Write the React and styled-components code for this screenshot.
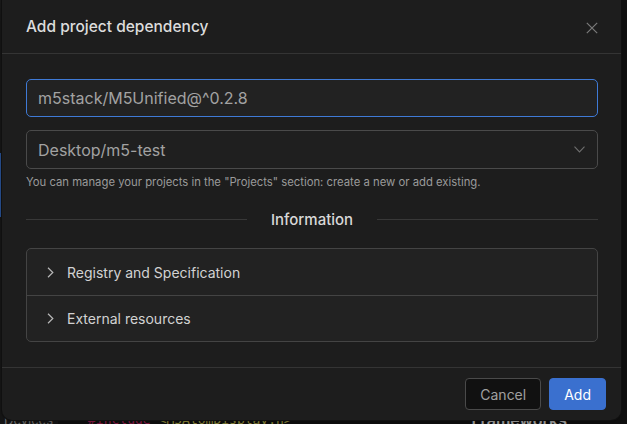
import React from 'react'
import styled, { createGlobalStyle } from 'styled-components'

const Global = createGlobalStyle`
  html, body { margin: 0; padding: 0; background: #121212; }
  body { font-family: Inter, "Noto Sans", sans-serif; }
  * { box-sizing: border-box; }
`

const Screen = styled.div`
  position: relative;
  width: 627px;
  height: 424px;
  overflow: hidden;
  display: flex;
  background: #121212;
`

const Sidebar = styled.aside`
  width: 58px;
  background: #1a1a1a;
  display: flex;
  flex-direction: column;
`

const ActiveMark = styled.div`
  width: 2px;
  height: 64px;
  margin-top: 153px;
  background: #2f5fae;
`

const Grow = styled.div`
  flex: 1;
`

const BottomLine = styled.div`
  height: 14px;
  display: flex;
  align-items: flex-start;
  padding-left: ${(p) => p.$indent || 0}px;
  font-size: 13px;
  line-height: 20px;
  color: ${(p) => p.$color || '#8a8a8a'};
  white-space: nowrap;
`

const Editor = styled.main`
  flex: 1;
  display: flex;
  flex-direction: column;
`

const EditorBottom = styled.div`
  display: flex;
  justify-content: space-between;
  padding-right: 60px;
`

const Code = styled.span`
  font-family: "DejaVu Sans Mono", monospace;
  font-size: 13px;
  color: ${(p) => p.$color};
  margin-right: ${(p) => p.$gap || 0}px;
`

const Heading = styled.span`
  font-size: 16px;
  font-weight: 600;
  color: #d6d6d6;
`

const Modal = styled.div`
  position: absolute;
  top: 0;
  left: 2px;
  width: 619px;
  height: 420px;
  background: #1d1d1d;
  border-radius: 0 0 10px 10px;
  box-shadow: 0 0 0 1px #101010, 0 8px 24px rgba(0, 0, 0, 0.5);
  display: flex;
  flex-direction: column;
`

const Header = styled.header`
  height: 54px;
  padding: 0 23px 0 24px;
  display: flex;
  align-items: center;
  justify-content: space-between;
  border-bottom: 1px solid #343434;
`

const Title = styled.h2`
  margin: 0;
  font-size: 15.5px;
  font-weight: 500;
  color: #dcdcdc;
`

const Close = styled.button`
  border: 0;
  background: none;
  padding: 0;
  display: flex;
  margin-top: 2px;
`

const Body = styled.div`
  flex: 1;
  padding: 25px 23px 0 24px;
  display: flex;
  flex-direction: column;
  border-bottom: 1px solid #343434;
`

const Field = styled.div`
  height: ${(p) => p.$h || 38}px;
  border: 1px solid ${(p) => (p.$focus ? '#3f7ad6' : '#4a4a4a')};
  border-radius: 5px;
  background: ${(p) => (p.$focus ? '#222' : '#1f1f1f')};
  padding: 0 12px 0 11px;
  display: flex;
  align-items: center;
  justify-content: space-between;
  font-size: 16px;
  color: #a2a2a2;
  margin-top: ${(p) => p.$mt || 0}px;
`

const Hint = styled.p`
  margin: 6px 0 0;
  font-size: 11.3px;
  color: #9a9a9a;
`

const Divider = styled.div`
  display: flex;
  align-items: center;
  gap: 24px;
  margin-top: 21px;
  font-size: 15px;
  font-weight: 500;
  color: #d8d8d8;

  &::before, &::after {
    content: '';
    flex: 1;
    height: 1px;
    background: #383838;
  }
`

const Accordion = styled.div`
  margin-top: 19px;
  border: 1px solid #444;
  border-radius: 5px;
  background: #222;
`

const Row = styled.div`
  height: 46px;
  display: flex;
  align-items: center;
  gap: 13px;
  padding-left: 20px;
  font-size: 14px;
  color: #d2d2d2;
  & + & { border-top: 1px solid #444; }
`

const Footer = styled.footer`
  height: 52px;
  padding: 0 15px 0 0;
  display: flex;
  align-items: center;
  justify-content: flex-end;
  gap: 8px;
`

const Button = styled.button`
  height: 32px;
  padding: 0 ${(p) => (p.$primary ? 14 : 14)}px;
  border-radius: 4px;
  font-family: inherit;
  font-size: 14px;
  border: 1px solid ${(p) => (p.$primary ? '#3a70cf' : '#4a4a4a')};
  background: ${(p) => (p.$primary ? '#3a70cf' : '#111')};
  color: ${(p) => (p.$primary ? '#fff' : '#a0a0a0')};
`

const Chevron = ({ dir, color }) =>
  dir === 'down' ? (
    <svg width="11" height="7" viewBox="0 0 11 7" fill="none">
      <path d="M0.5 0.7 L5.5 6 L10.5 0.7" stroke={color} strokeWidth="1.1" />
    </svg>
  ) : (
    <svg width="7" height="11" viewBox="0 0 7 11" fill="none">
      <path d="M1 0.8 L5.8 5.5 L1 10.2" stroke={color} strokeWidth="1.2" />
    </svg>
  )

export default function App() {
  return (
    <>
      <Global />
      <Screen>
        <Sidebar>
          <ActiveMark />
          <Grow />
          <BottomLine $indent={4}>Devices</BottomLine>
        </Sidebar>
        <Editor>
          <Grow />
          <EditorBottom>
            <BottomLine $indent={30}>
              <Code $color="#b3205e" $gap={8}>#include</Code>
              <Code $color="#b7b04a">&lt;M5AtomDisplay.h&gt;</Code>
            </BottomLine>
            <BottomLine>
              <Heading>Frameworks</Heading>
            </BottomLine>
          </EditorBottom>
        </Editor>

        <Modal>
          <Header>
            <Title>Add project dependency</Title>
            <Close>
              <svg width="12" height="12" viewBox="0 0 12 12" fill="none">
                <path d="M0.8 0.8 L11.2 11.2 M11.2 0.8 L0.8 11.2" stroke="#7a7a7a" strokeWidth="1.2" />
              </svg>
            </Close>
          </Header>
          <Body>
            <Field $focus>m5stack/M5Unified@^0.2.8</Field>
            <Field $mt={13} $h={39}>
              Desktop/m5-test
              <Chevron dir="down" color="#6e6e6e" />
            </Field>
            <Hint>You can manage your projects in the "Projects" section: create a new or add existing.</Hint>
            <Divider>Information</Divider>
            <Accordion>
              <Row>
                <Chevron dir="right" color="#b8b8b8" />
                Registry and Specification
              </Row>
              <Row>
                <Chevron dir="right" color="#b8b8b8" />
                External resources
              </Row>
            </Accordion>
          </Body>
          <Footer>
            <Button>Cancel</Button>
            <Button $primary>Add</Button>
          </Footer>
        </Modal>
      </Screen>
    </>
  )
}
